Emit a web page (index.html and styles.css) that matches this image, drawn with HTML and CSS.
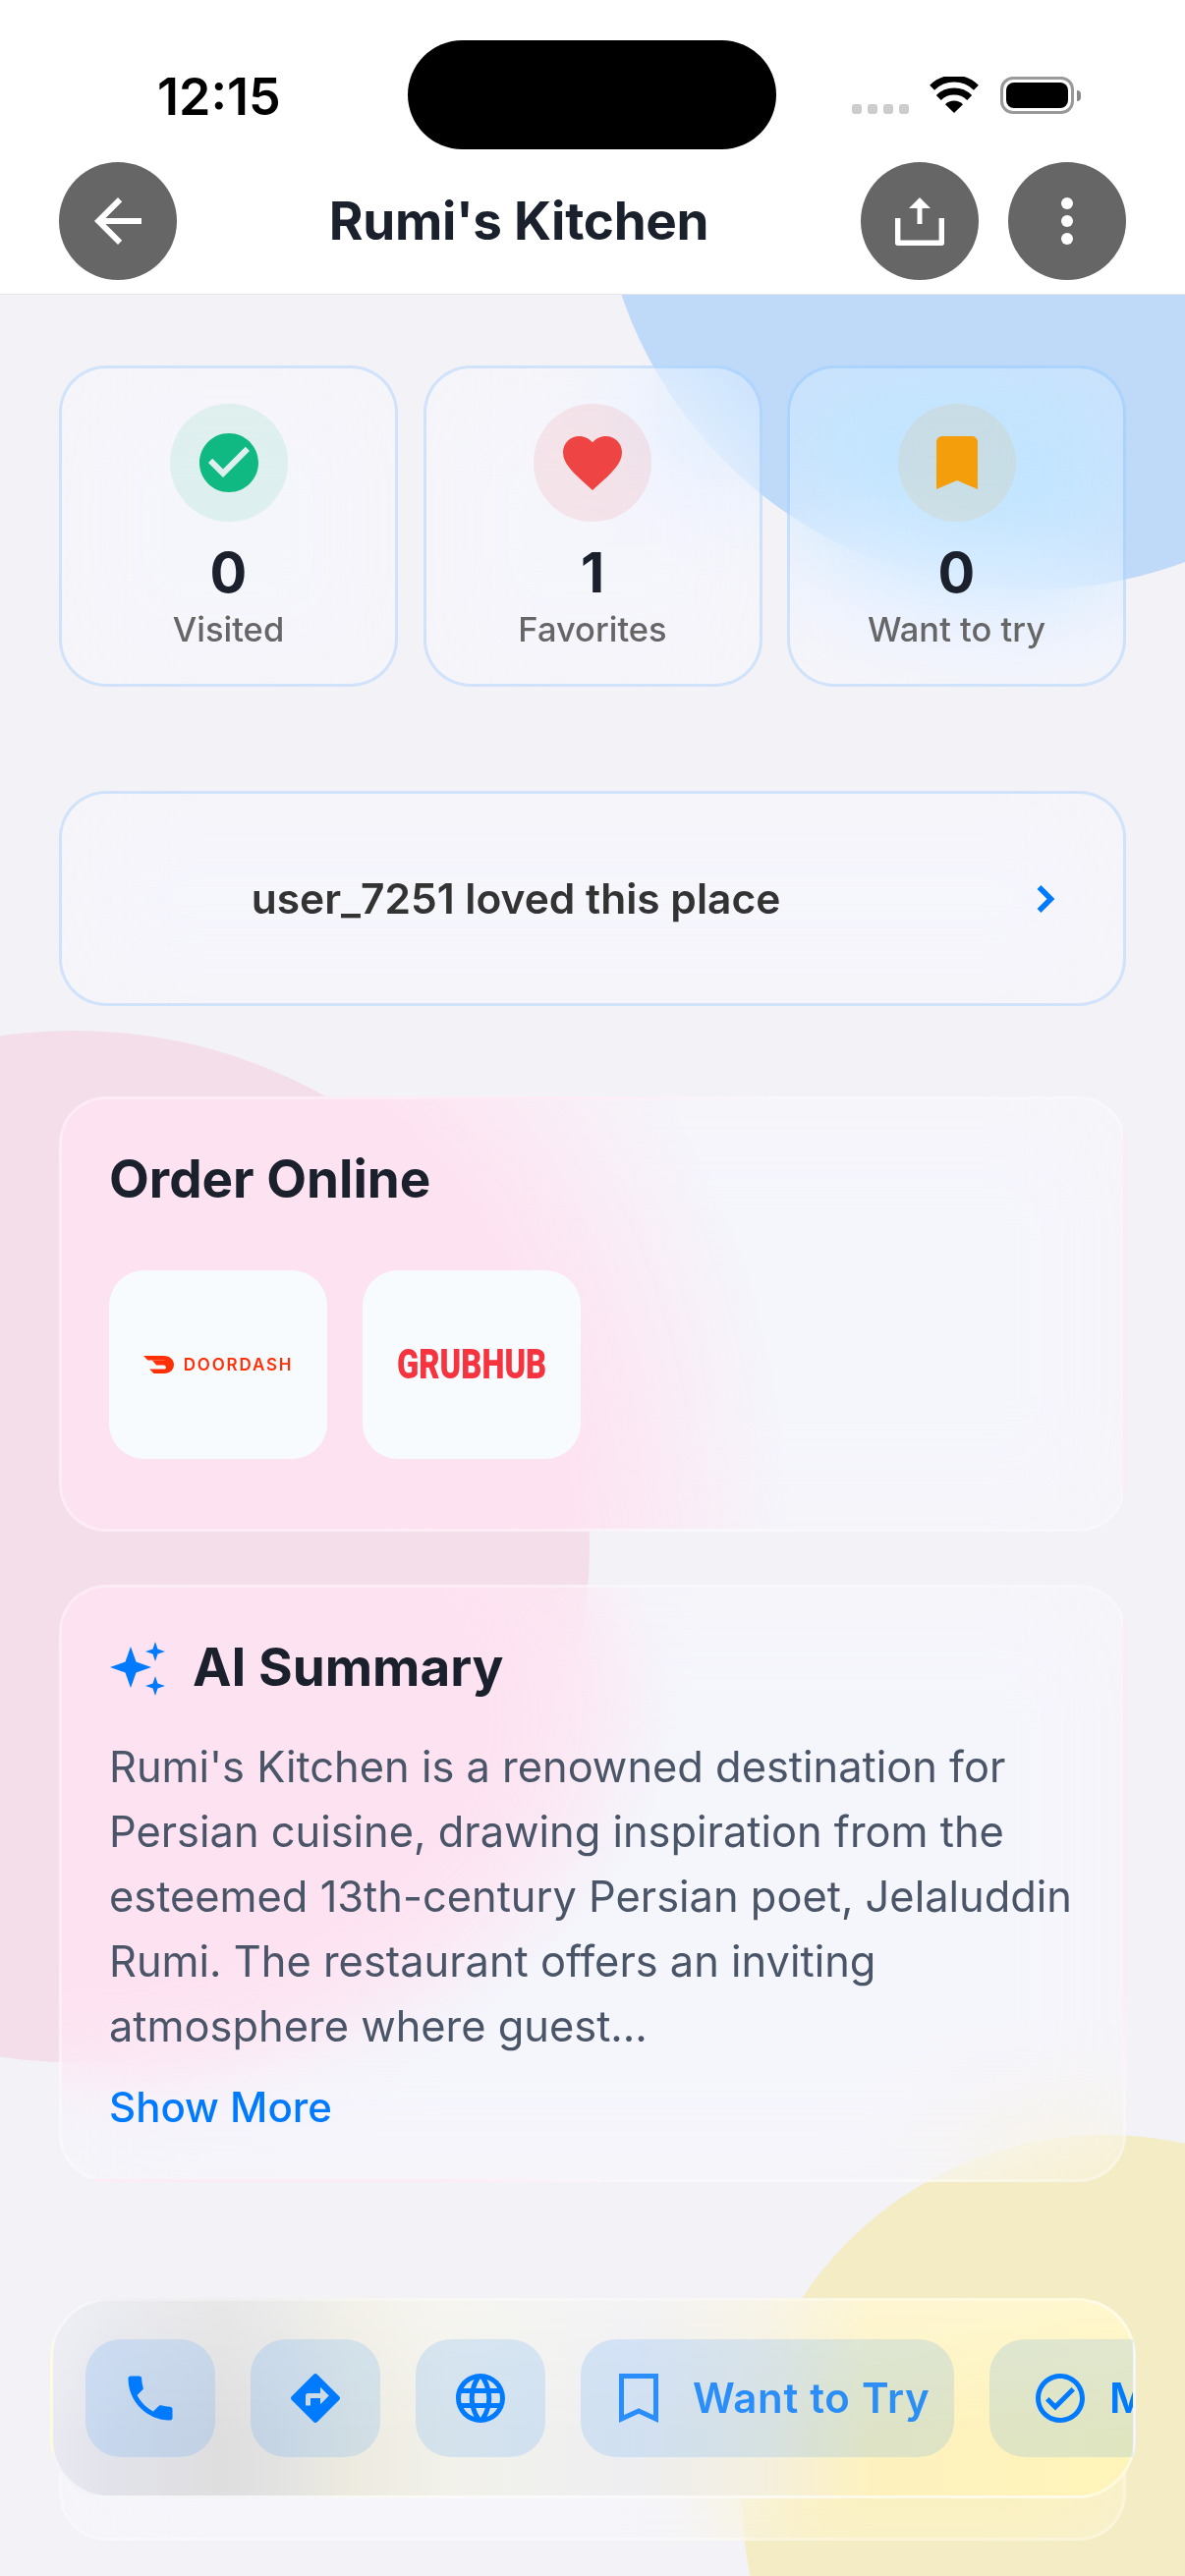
FILE: index.html
```html
<!DOCTYPE html>
<html lang="en">
<head>
<meta charset="utf-8">
<title>Rumi's Kitchen</title>
<link rel="stylesheet" href="styles.css">
</head>
<body>
<div class="page">
  <div class="blob blob-blue"></div>
  <div class="blob blob-pink"></div>
  <div class="blob blob-yellow"></div>

  <header class="top">
    <div class="status">
      <span class="time">12:15</span>
      <div class="island"></div>
      <div class="status-right">
        <div class="cells"><i></i><i></i><i></i><i></i></div>
        <svg class="wifi" viewBox="0 0 50 37"><path d="M25 37 16 28.2a13 13 0 0 1 18 0z"/><path d="M9.3 21.4a22.5 22.5 0 0 1 31.4 0" class="arc"/><path d="M2.6 11.2a32 32 0 0 1 44.8 0" class="arc"/></svg>
        <div class="battery"><div class="battery-fill"></div></div>
        <div class="battery-cap"></div>
      </div>
    </div>
    <nav class="nav">
      <button class="round"><svg class="ic72" viewBox="0 0 24 24"><path d="M20 11H7.83l5.59-5.59L12 4l-8 8 8 8 1.41-1.41L7.83 13H20v-2z"/></svg></button>
      <h1 class="title">Rumi's Kitchen</h1>
      <div class="nav-right">
        <button class="round"><svg class="ic60" viewBox="0 0 60 60"><path class="tray" d="M7.7 27V52.2H52.3V27"/><path d="M30 6 41 17H32.5V33H27.5V17H19z"/></svg></button>
        <button class="round"><svg class="ic72" viewBox="0 0 24 24"><circle cx="12" cy="6" r="2"/><circle cx="12" cy="12" r="2"/><circle cx="12" cy="18" r="2"/></svg></button>
      </div>
    </nav>
  </header>

  <main class="content">
    <section class="stats">
      <div class="stat glass-blue">
        <div class="stat-ic ic-green"><svg class="ic72" viewBox="0 0 24 24"><path d="M12 2C6.48 2 2 6.48 2 12s4.48 10 10 10 10-4.48 10-10S17.52 2 12 2zm-2 15l-5-5 1.41-1.41L10 14.17l7.59-7.59L19 8l-9 9z"/></svg></div>
        <div class="stat-num">0</div>
        <div class="stat-label">Visited</div>
      </div>
      <div class="stat glass-blue">
        <div class="stat-ic ic-red"><svg class="ic72" viewBox="0 0 24 24"><path d="M12 21.35l-1.45-1.32C5.4 15.36 2 12.28 2 8.5 2 5.42 4.42 3 7.5 3c1.74 0 3.41.81 4.5 2.09C13.09 3.81 14.76 3 16.5 3 19.58 3 22 5.42 22 8.5c0 3.78-3.4 6.86-8.55 11.54L12 21.35z"/></svg></div>
        <div class="stat-num">1</div>
        <div class="stat-label">Favorites</div>
      </div>
      <div class="stat glass-blue">
        <div class="stat-ic ic-orange"><svg class="ic72" viewBox="0 0 24 24"><path d="M17 3H7c-1.1 0-1.99.9-1.99 2L5 21l7-3 7 3V5c0-1.1-.9-2-2-2z"/></svg></div>
        <div class="stat-num">0</div>
        <div class="stat-label">Want to try</div>
      </div>
    </section>

    <section class="loved glass-blue">
      <span class="loved-text">user_7251 loved this place</span>
      <svg class="chev" viewBox="0 0 20 30"><path d="M3.5 3 15.5 15 3.5 27"/></svg>
    </section>

    <section class="card glass-white order">
      <h2 class="card-title">Order Online</h2>
      <div class="tiles">
        <div class="tile">
          <svg class="dd-mark" viewBox="0 0 31 18"><path d="M0 0H20.5C27 0 31 4 31 9S27 18 21 18H10.5L6.2 13.6H21.2C23 13.6 24.2 11 21 9.4H13.2L9 4.8H21.5C22 4.8 21.5 4.6 20.5 4.6H4.4z"/></svg>
          <span class="dd-text">DOORDASH</span>
        </div>
        <div class="tile"><span class="gh-text">GRUBHUB</span></div>
      </div>
    </section>

    <section class="card glass-white summary">
      <div class="summary-head">
        <svg class="spark" viewBox="0 0 60 60"><path d="M22 9 27.5 24.5 43 30 27.5 35.5 22 51 16.500 35.500 1 30 16.500 24.500z"/><path d="M47 4 49.500 11.500 57 14 49.500 16.500 47 24 44.500 16.500 37 14 44.500 11.500z"/><path d="M47 39 49.500 46.500 57 49 49.500 51.500 47 59 44.500 51.500 37 49 44.500 46.500z"/></svg>
        <h2 class="card-title">AI Summary</h2>
      </div>
      <p class="summary-text">Rumi's Kitchen is a renowned destination for Persian cuisine, drawing inspiration from the esteemed 13th-century Persian poet, Jelaluddin Rumi. The restaurant offers an inviting atmosphere where guest...</p>
      <div class="more">Show More</div>
    </section>

    <section class="card glass-white tail"></section>
  </main>

  <div class="bar">
    <div class="bar-scroll">
      <div class="act act-sq"><svg class="ic60" viewBox="0 0 24 24"><path d="M6.62 10.79c1.44 2.83 3.76 5.14 6.59 6.59l2.2-2.2c.27-.27.67-.36 1.02-.24 1.12.37 2.33.57 3.57.57.55 0 1 .45 1 1V20c0 .55-.45 1-1 1-9.39 0-17-7.61-17-17 0-.55.45-1 1-1h3.5c.55 0 1 .45 1 1 0 1.25.2 2.45.57 3.57.11.35.03.74-.25 1.02l-2.2 2.2z"/></svg></div>
      <div class="act act-sq"><svg class="ic60" viewBox="0 0 24 24"><path d="M21.71 11.29l-9-9c-.39-.39-1.02-.39-1.41 0l-9 9c-.39.39-.39 1.02 0 1.41l9 9c.39.39 1.02.39 1.41 0l9-9c.39-.38.39-1.01 0-1.41zM14 14.5V12h-4v3H8v-4c0-.55.45-1 1-1h5V7.5l3.5 3.5-3.5 3.5z"/></svg></div>
      <div class="act act-sq"><svg class="ic60" viewBox="0 0 24 24"><path fill-rule="evenodd" d="M16.36,14C16.44,13.34 16.5,12.68 16.5,12C16.5,11.32 16.44,10.66 16.36,10H19.74C19.9,10.64 20,11.31 20,12C20,12.69 19.9,13.36 19.74,14M14.59,19.56C15.19,18.45 15.65,17.25 15.97,16H18.92C17.96,17.65 16.43,18.93 14.59,19.56M14.34,14H9.66C9.56,13.34 9.5,12.68 9.5,12C9.5,11.32 9.56,10.65 9.66,10H14.34C14.43,10.65 14.5,11.32 14.5,12C14.5,12.68 14.43,13.34 14.34,14M12,19.96C11.17,18.76 10.5,17.43 10.09,16H13.91C13.5,17.43 12.83,18.76 12,19.96M8,8H5.08C6.03,6.34 7.57,5.06 9.4,4.44C8.8,5.55 8.35,6.75 8,8M5.08,16H8C8.35,17.25 8.8,18.45 9.4,19.56C7.57,18.93 6.03,17.65 5.08,16M4.26,14C4.1,13.36 4,12.69 4,12C4,11.31 4.1,10.64 4.26,10H7.64C7.56,10.66 7.5,11.32 7.5,12C7.5,12.68 7.56,13.34 7.64,14M12,4.03C12.83,5.23 13.5,6.57 13.91,8H10.09C10.5,6.57 11.17,5.23 12,4.03M18.92,8H15.97C15.65,6.75 15.19,5.55 14.59,4.44C16.43,5.07 17.96,6.34 18.92,8M12,2C6.47,2 2,6.5 2,12A10,10 0 0,0 12,22A10,10 0 0,0 22,12A10,10 0 0,0 12,2Z"/></svg></div>
      <div class="act act-want"><svg class="ic60 soft" viewBox="0 0 24 24"><path class="mark" d="M5 3H19V20.4L12 17.2 5 20.4z"/></svg><span class="act-label soft">Want to Try</span></div>
      <div class="act act-visit"><svg class="ic60" viewBox="0 0 24 24"><path d="M12 2C6.48 2 2 6.48 2 12s4.48 10 10 10 10-4.48 10-10S17.52 2 12 2zm0 18c-4.41 0-8-3.59-8-8s3.59-8 8-8 8 3.59 8 8-3.59 8-8 8zm4.59-12.42L10 14.17l-2.59-2.58L6 13l4 4 8-8z"/></svg><span class="act-label">Mark Visited</span></div>
    </div>
  </div>
</div>
</body>
</html>
```
FILE: styles.css
```css
* { box-sizing: border-box; margin: 0; padding: 0; }
html, body { width: 1206px; height: 2622px; overflow: hidden; }
body { font-family: Inter, "Liberation Sans", sans-serif; background: #f2f2f7; }
.page { position: relative; width: 1206px; height: 2622px; overflow: hidden; background: #f2f2f7; }

.blob { position: absolute; border-radius: 50%; }
.blob-blue { left: 609px; top: -284px; width: 884px; height: 884px; background: #bfd9f9; }
.blob-pink { left: -450px; top: 1049px; width: 1050px; height: 1050px; background: #f3dee9; }
.blob-yellow { left: 755px; top: 2173px; width: 740px; height: 740px; background: #f4ecc5; }

.top { position: relative; height: 300px; background: #fff; border-bottom: 1px solid #e5e5ea; }
.status { position: relative; display: flex; justify-content: space-between; height: 165px; padding: 0 0 0 160px; }
.time { margin-top: 72px; font-size: 52px; line-height: 54px; font-weight: 600; color: #000; }
.island { position: absolute; left: 415px; top: 41px; width: 375px; height: 111px; border-radius: 56px; background: #000; }
.status-right { display: flex; align-items: flex-start; padding: 78px 106px 0 0; }
.cells { display: flex; gap: 6px; margin: 28px 21px 0 0; }
.cells i { display: block; width: 10px; height: 10px; border-radius: 3px; background: #ccc; }
.wifi { width: 50px; height: 37px; margin-right: 22px; }
.wifi .arc { fill: none; stroke: #000; stroke-width: 7; }
.battery { width: 75px; height: 38px; padding: 3px; border: 3px solid #999; border-radius: 13px; }
.battery-fill { height: 100%; border-radius: 8px; background: #000; }
.battery-cap { width: 4px; height: 11px; margin: 14px 0 0 3px; border-radius: 0 4px 4px 0; background: #888; }

.nav { position: relative; display: flex; align-items: center; justify-content: space-between; height: 120px; padding: 0 60px; }
.round { display: flex; align-items: center; justify-content: center; width: 120px; height: 120px; border: 0; border-radius: 50%; background: #666; fill: #fff; }
.nav-right { display: flex; gap: 30px; }
.title { font-size: 53px; line-height: 66px; font-weight: 700; letter-spacing: -.3px; color: #1a202c; }
.ic72 { display: block; width: 72px; height: 72px; }
.ic60 { display: block; flex: none; width: 60px; height: 60px; }
.tray { fill: none; stroke: #fff; stroke-width: 5.4; stroke-linejoin: round; }

.content { padding: 72px 60px 0; }
.stats { display: grid; grid-template-columns: repeat(3, 345px); gap: 25.5px; }
.glass-blue { border: 3px solid rgba(0, 122, 255, .15); background: rgba(255, 255, 255, .25); backdrop-filter: blur(60px) saturate(180%); }
.glass-white { border: 3px solid rgba(255, 255, 255, .3); background: rgba(255, 255, 255, .25); backdrop-filter: blur(60px) saturate(180%); }
.stat { display: flex; flex-direction: column; align-items: center; height: 327px; padding-top: 36px; border-radius: 48px; }
.stat-ic { display: flex; align-items: center; justify-content: center; width: 120px; height: 120px; border-radius: 50%; }
.ic-green { background: rgba(16, 185, 129, .1); fill: #10b981; }
.ic-red { background: rgba(239, 68, 68, .1); fill: #ef4444; }
.ic-orange { background: rgba(245, 158, 11, .1); fill: #f59e0b; }
.stat-num { margin-top: 19px; font-size: 56px; line-height: 66px; font-weight: 700; color: #1a202c; }
.stat-label { margin-top: 4px; font-size: 34.5px; line-height: 42px; font-weight: 500; color: #666; }

.loved { position: relative; display: flex; align-items: center; justify-content: center; height: 219px; margin-top: 106px; padding-right: 156px; border-radius: 48px; }
.loved-text { font-size: 42.5px; line-height: 54px; font-weight: 600; color: #333; }
.chev { position: absolute; right: 69px; top: 92px; width: 20px; height: 30px; }
.chev path { fill: none; stroke: #007aff; stroke-width: 5.5; }

.card { border-radius: 48px; }
.card-title { font-size: 53px; line-height: 66px; font-weight: 700; color: #1a202c; }
.order { height: 443px; margin-top: 92px; padding: 48px 48px 0; background: radial-gradient(ellipse 740px 800px at 0 100%, #fde3f1 0, #fde3f1 70%, rgba(253, 227, 241, 0) 100%), rgba(255, 255, 255, .25); }
.tiles { display: flex; gap: 36px; margin-top: 60px; }
.tile { display: flex; align-items: center; justify-content: center; gap: 10px; width: 222px; height: 192px; border-radius: 36px; background: #f7fbfe; }
.dd-mark { display: block; width: 31px; height: 18px; fill: #ff3008; }
.dd-text { font-size: 17px; line-height: 20px; font-weight: 600; letter-spacing: 1.8px; color: #ff3008; }
.gh-text { display: block; margin-top: -2px; font-family: Roboto, sans-serif; font-size: 43px; line-height: 50px; font-weight: 900; color: #f63440; transform: scaleX(.76); }

.summary { height: 608px; margin-top: 54px; padding: 48px 48px 0; background: radial-gradient(ellipse 620px 400px at 0 130px, #fde3f1 0, #fde3f1 70%, rgba(253, 227, 241, 0) 100%), rgba(255, 255, 255, .25); }
.summary-head { display: flex; align-items: center; gap: 25px; height: 66px; }
.spark { display: block; flex: none; width: 60px; height: 60px; fill: #007aff; }
.summary-text { margin-top: 35px; font-size: 43.4px; line-height: 66px; color: #4a5568; }
.more { margin-top: 23px; font-size: 42px; line-height: 54px; font-weight: 500; color: #007aff; }

.tail { height: 160px; margin-top: 205px; }

.bar { position: absolute; left: 51px; top: 2339px; width: 1105px; height: 204px; padding: 39px 0 0 33px; border: 3px solid rgba(255, 255, 255, .5); border-radius: 60px; background: linear-gradient(180deg, rgba(255, 255, 255, .3), rgba(255, 255, 255, 0) 70%), linear-gradient(90deg, #e9eaf1 0, #e2e3ea 60px, #dededf 170px, #e3e3e2 235px, #edebe0 304px, #f2f1ea 400px, #f0f0ee 500px, #eeeef1 590px, #f4efdf 720px, #fdf2bf 830px, #fff4b8 1105px); }
.bar-scroll { display: flex; gap: 36px; height: 120px; overflow: hidden; }
.act { display: flex; align-items: center; flex: none; height: 120px; border-radius: 36px; background: rgba(0, 122, 255, .12); fill: #007aff; }
.act-sq { justify-content: center; width: 132px; }
.act-want { width: 380px; padding-left: 29px; gap: 25px; }
.act-visit { width: 380px; padding-left: 42px; gap: 20px; }
.act-label { font-size: 42px; line-height: 54px; font-weight: 600; letter-spacing: .7px; color: #007aff; white-space: nowrap; }
.soft { opacity: .8; }
.mark { fill: none; stroke: #007aff; stroke-width: 2; stroke-linejoin: miter; }
```
